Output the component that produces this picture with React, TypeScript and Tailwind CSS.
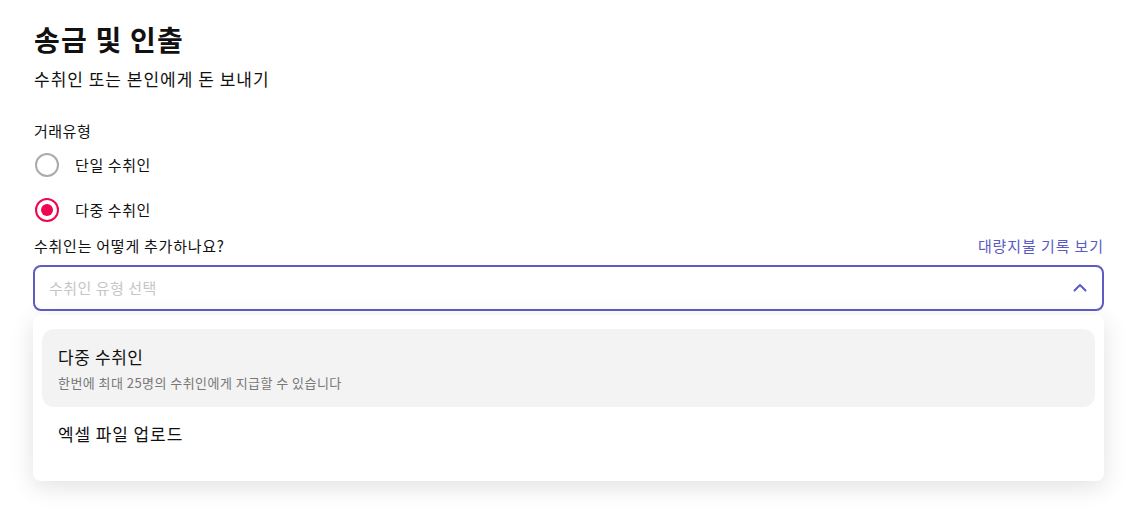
import { useState } from "react"

const font = { fontFamily: '"Noto Sans CJK KR", "Noto Sans", sans-serif' }

function Radio({ label, checked, onClick }: { label: string; checked: boolean; onClick: () => void }) {
    return (
        <button onClick={onClick} className="flex h-[45px] items-center gap-4 pl-[2px] text-left">
            <span
                className={
                    checked
                        ? "flex h-6 w-6 items-center justify-center rounded-full border-2 border-[#f00551]"
                        : "flex h-6 w-6 items-center justify-center rounded-full border-2 border-[#ababab]"
                }
            >
                {checked && <span className="h-3 w-3 rounded-full bg-[#f00551]" />}
            </span>
            <span className="text-[15px] leading-[22px] tracking-[0.6px] text-[#111]">{label}</span>
        </button>
    )
}

export default function App() {
    const [type, setType] = useState("multi")

    return (
        <div style={font} className="h-[517px] w-[1138px] overflow-hidden bg-white pl-[33px] pr-[34px] pt-[19px]">
            <h1 className="pl-[1px] text-[28px] font-bold leading-[40px] tracking-[1.2px] text-[#111]">송금 및 인출</h1>
            <p className="mt-2 pl-[1px] text-[17px] leading-[24px] tracking-[1px] text-[#111]">수취인 또는 본인에게 돈 보내기</p>

            <div className="mt-[29px] pl-[1px] text-[15px] leading-[22px] tracking-[0.5px] text-[#111]">거래유형</div>
            <div className="flex flex-col items-start">
                <Radio label="단일 수취인" checked={type === "single"} onClick={() => setType("single")} />
                <Radio label="다중 수취인" checked={type === "multi"} onClick={() => setType("multi")} />
            </div>

            <div className="mt-[3px] flex items-center justify-between">
                <span className="pl-[1px] text-[15px] leading-[22px] tracking-[0.75px] text-[#111]">수취인는 어떻게 추가하나요?</span>
                <a href="#" className="text-[15px] leading-[22px] tracking-[0.9px] text-[#5a5ac6]">
                    대량지불 기록 보기
                </a>
            </div>

            <div className="relative mt-2">
                <div className="flex h-[46px] items-center justify-between rounded-lg border-2 border-[#5c5cc4] bg-white pl-[14px] pr-[14px]">
                    <span className="text-[15px] tracking-[0.5px] text-[#c6c6c6]">수취인 유형 선택</span>
                    <svg width="16" height="16" viewBox="0 0 16 16" fill="none" stroke="#5c5cc4" strokeWidth="2" strokeLinecap="round" strokeLinejoin="round">
                        <path d="M2.5 10.5 8 5l5.5 5.5" />
                    </svg>
                </div>

                <div className="absolute left-0 right-0 top-full mt-1 h-[166px] rounded-lg bg-white px-[9px] pt-[14px] shadow-[0_6px_24px_rgba(0,0,0,0.12)]">
                    <div className="flex h-[78px] flex-col justify-center rounded-xl bg-[#f3f3f3] px-4">
                        <div className="text-[17px] leading-[24px] tracking-[0.6px] text-[#111]">다중 수취인</div>
                        <div className="mt-[5px] text-[13px] leading-[18px] tracking-[0.45px] text-[#777]">한번에 최대 25명의 수취인에게 지급할 수 있습니다</div>
                    </div>
                    <div className="flex h-[54px] items-center px-4 text-[17px] tracking-[0.9px] text-[#111]">엑셀 파일 업로드</div>
                </div>
            </div>
        </div>
    )
}
